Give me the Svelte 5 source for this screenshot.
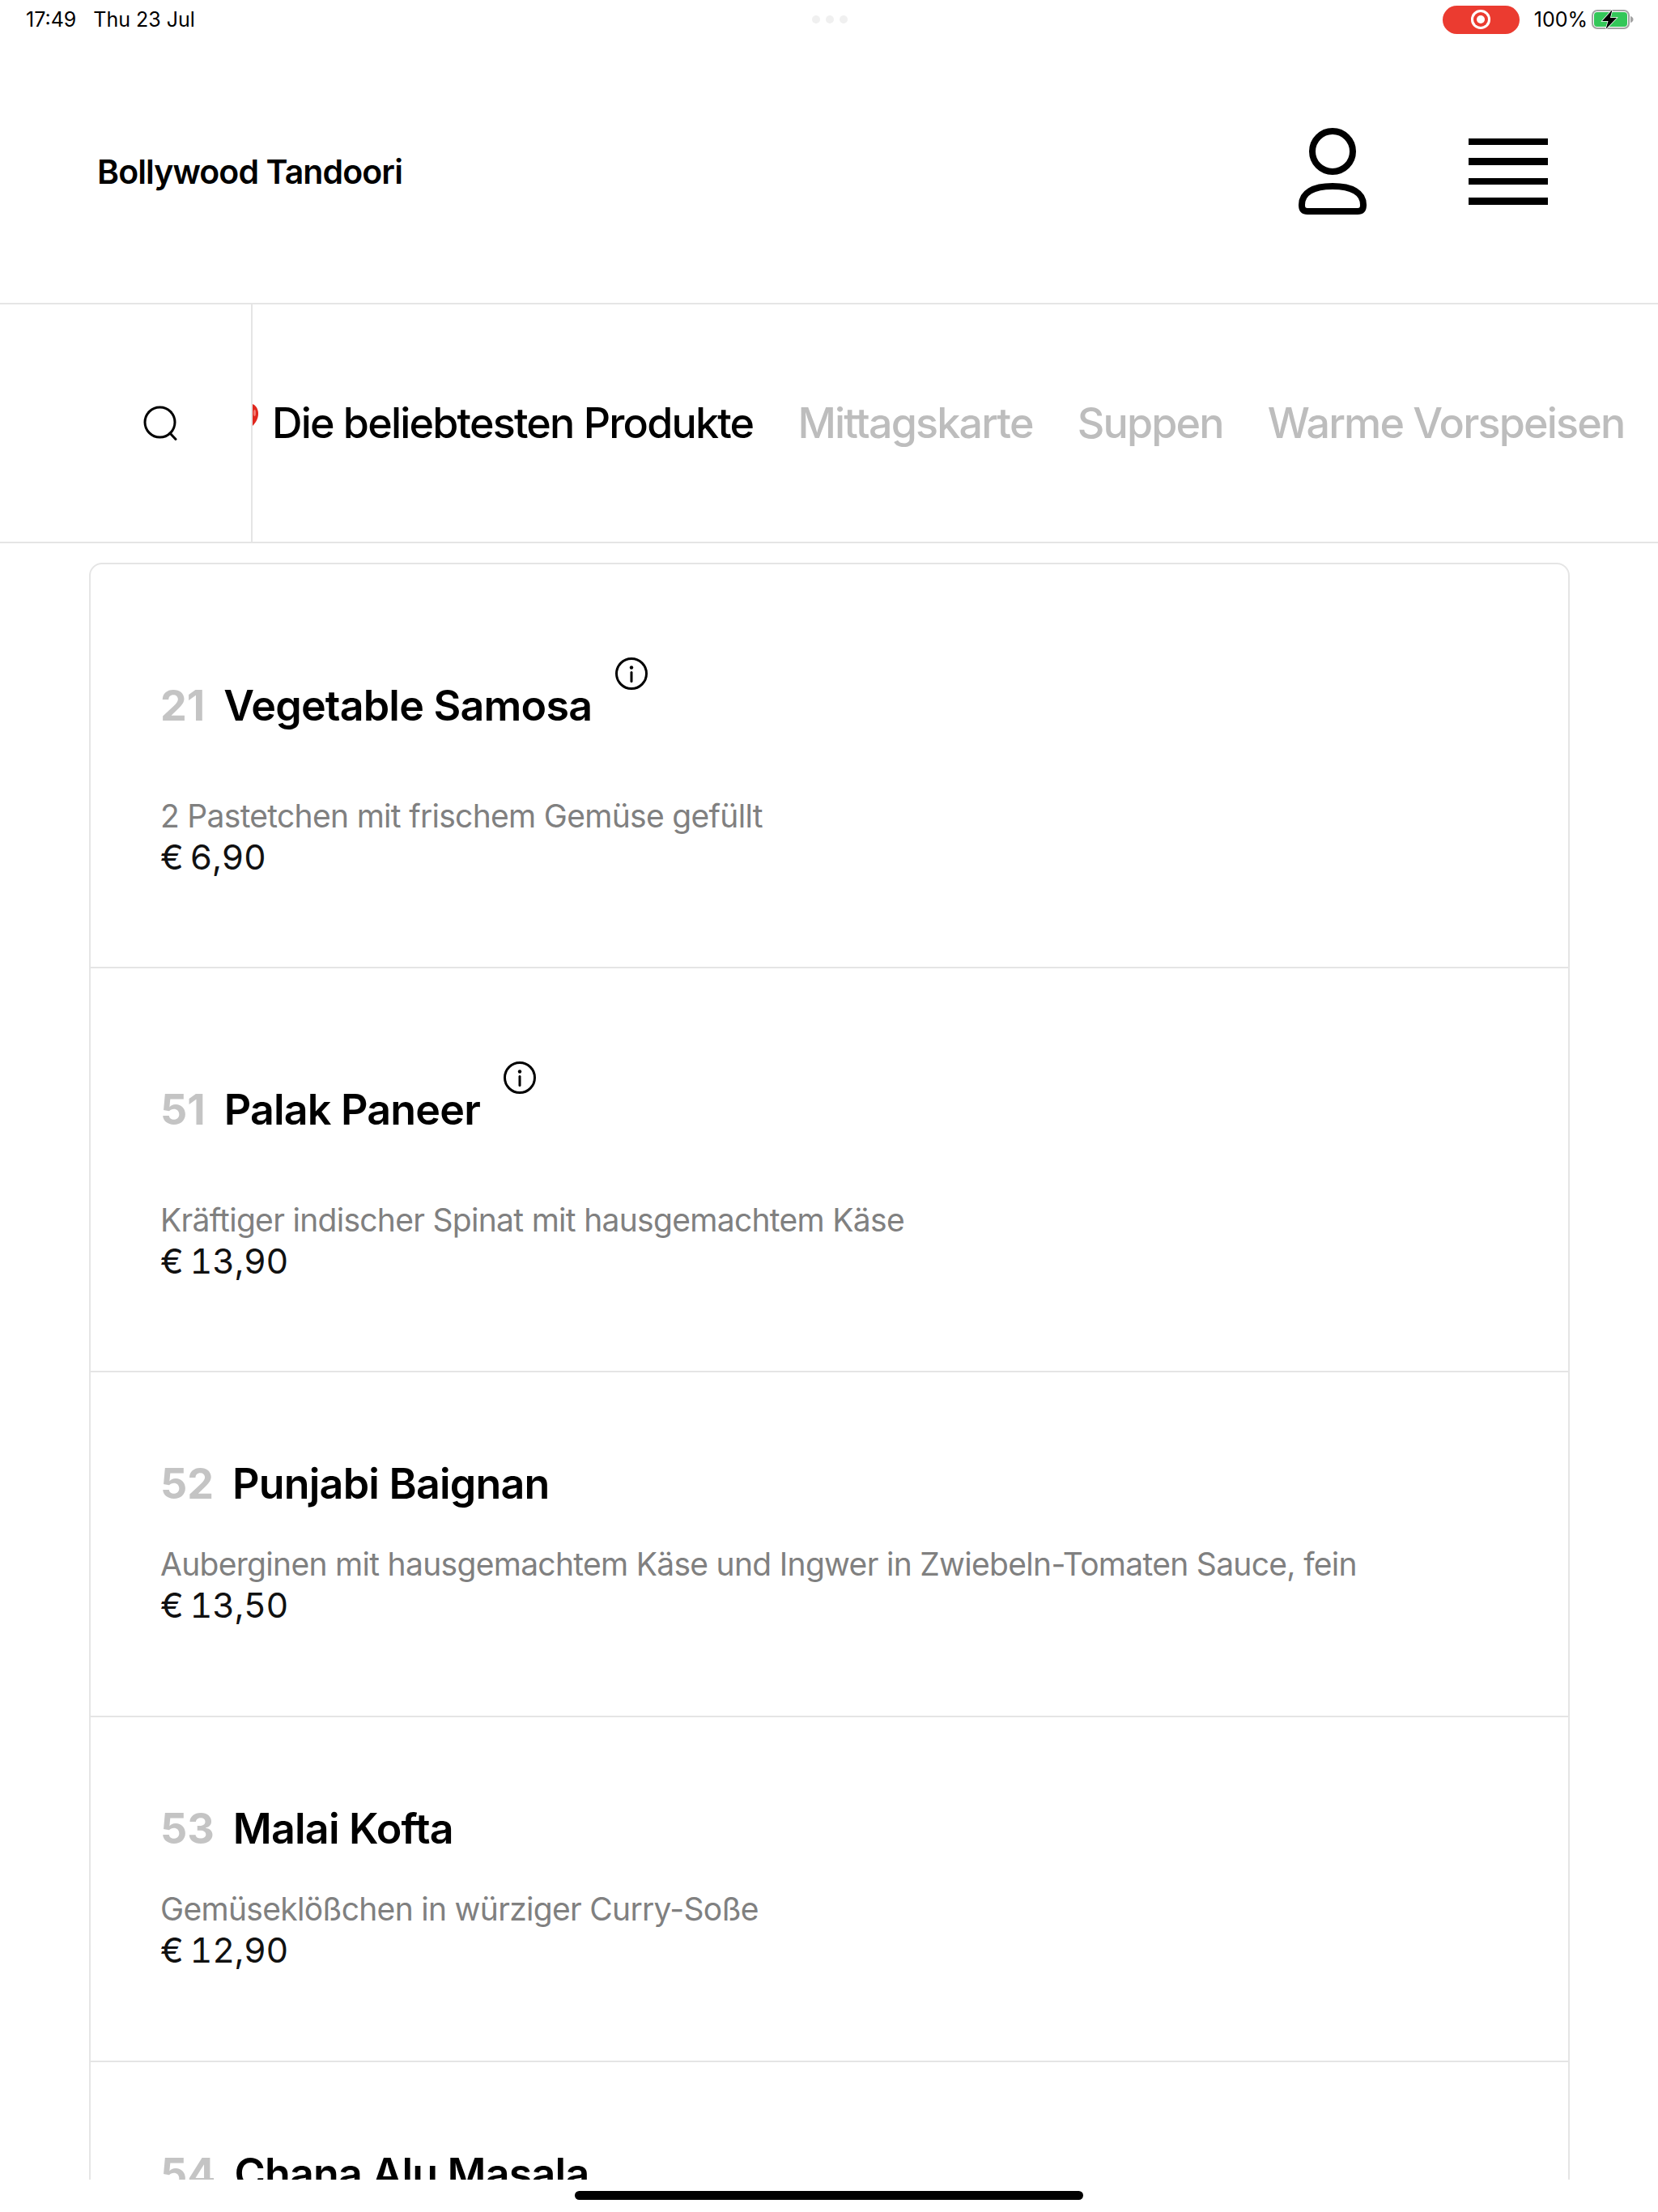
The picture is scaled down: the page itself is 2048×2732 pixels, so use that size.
<script>
	const tabs = ['Mittagskarte', 'Suppen', 'Warme Vorspeisen'];

	const dishes = [
		{ no: 21, name: 'Vegetable Samosa', info: true, desc: '2 Pastetchen mit frischem Gemüse gefüllt', price: '€ 6,90' },
		{ no: 51, name: 'Palak Paneer', info: true, desc: 'Kräftiger indischer Spinat mit hausgemachtem Käse', price: '€ 13,90' },
		{ no: 52, name: 'Punjabi Baignan', info: false, desc: 'Auberginen mit hausgemachtem Käse und Ingwer in Zwiebeln-Tomaten Sauce, fein', price: '€ 13,50' },
		{ no: 53, name: 'Malai Kofta', info: false, desc: 'Gemüseklößchen in würziger Curry-Soße', price: '€ 12,90' },
		{ no: 54, name: 'Chana Alu Masala', info: false, desc: 'Kichererbsen und Kartoffeln in würziger Soße', price: '€ 12,50' }
	];
</script>

<div class="page">
	<div class="statusbar">
		<div class="time">
			<span>17:49</span>
			<span>Thu 23 Jul</span>
		</div>
		<div class="dots"><i></i><i></i><i></i></div>
		<div class="status-right">
			<div class="rec"><b></b></div>
			<span>100%</span>
			<svg class="battery" width="52" height="24" viewBox="0 0 52 24">
				<rect x="1" y="1" width="45" height="22" rx="6" fill="none" stroke="#a3a3a3" stroke-width="2" />
				<rect x="3" y="3" width="41" height="18" rx="4" fill="#34c759" />
				<path d="M48 8c2 .6 3.500 2 3.500 4s-1.500 3.400-3.500 4z" fill="#a3a3a3" />
				<path d="M25.500 0 13 14h7.500L17.500 24 31 10h-8z" fill="#000" stroke="#fff" stroke-width="1.500" paint-order="stroke" />
			</svg>
		</div>
	</div>

	<header>
		<div class="brand">Bollywood Tandoori</div>
		<div class="header-icons">
			<svg class="user" width="86" height="108" viewBox="0 0 86 108" fill="none" stroke="#000" stroke-width="8">
				<circle cx="43" cy="29" r="25" />
				<path d="M5 95C5 80 19 72 43 72s38 8 38 23c0 5-2 8-7 8H12c-5 0-7-3-7-8z" />
			</svg>
			<div class="burger"><i></i><i></i><i></i><i></i></div>
		</div>
	</header>

	<nav>
		<div class="search">
			<svg width="42" height="44" viewBox="0 0 42 44" fill="none" stroke="#000" stroke-width="3">
				<circle cx="20.500" cy="20.500" r="18.500" />
				<path d="M33 34l7 7.500" stroke-linecap="round" />
			</svg>
		</div>
		<div class="tabs">
			<svg class="chili" width="7" height="27" viewBox="0 0 7 27">
				<path d="M0 0c4 1.500 7 6 7 12 0 6-3 11-7 15z" fill="#e0281e" />
				<ellipse cx="2.500" cy="11" rx="1.500" ry="4" fill="#f47a70" />
			</svg>
			<span class="tab active">Die beliebtesten Produkte</span>
			{#each tabs as tab}
				<span class="tab">{tab}</span>
			{/each}
		</div>
	</nav>

	<main>
		<section class="card">
			{#each dishes as d}
				<article class="dish">
					<div class="title" class:with-info={d.info}>
						<span class="no">{d.no}</span>
						<h2>{d.name}</h2>
						{#if d.info}
							<svg class="info" width="40" height="40" viewBox="0 0 40 40" fill="none" stroke="#000">
								<circle cx="20" cy="20" r="18.500" stroke-width="3" />
								<circle cx="20" cy="12.500" r="2.200" fill="#000" stroke="none" />
								<path d="M20 18.500v11" stroke-width="3" stroke-linecap="round" />
							</svg>
						{/if}
					</div>
					<p class="desc">{d.desc}</p>
					<p class="price">{d.price}</p>
				</article>
			{/each}
		</section>
	</main>

	<div class="home"><i></i></div>
</div>

<style>
	:global(body) {
		background: #fff;
	}

	.page {
		width: 2048px;
		height: 2732px;
		display: flex;
		flex-direction: column;
		overflow: hidden;
		background: #fff;
		color: #000;
		font-family: Inter, "Liberation Sans", sans-serif;
	}

	.statusbar {
		height: 48px;
		flex: none;
		display: grid;
		grid-template-columns: 1fr auto 1fr;
		align-items: center;
		padding: 0 30px 0 32px;
		font-size: 25px;
	}

	.time {
		display: flex;
		gap: 21px;
	}

	.dots {
		display: flex;
		gap: 7px;
	}

	.dots i {
		width: 10px;
		height: 10px;
		border-radius: 50%;
		background: #f0f0f0;
	}

	.status-right {
		display: flex;
		justify-content: flex-end;
		align-items: center;
		gap: 5px;
	}

	.rec {
		width: 95px;
		height: 35px;
		margin-right: 13px;
		border-radius: 18px;
		background: #eb3b30;
		display: flex;
		align-items: center;
		justify-content: center;
	}

	.rec b {
		width: 10px;
		height: 10px;
		border-radius: 50%;
		background: #fff;
		box-shadow: 0 0 0 4px #eb3b30, 0 0 0 7px #fff;
	}

	header {
		height: 328px;
		flex: none;
		display: flex;
		align-items: center;
		justify-content: space-between;
		padding: 2px 136px 0 120px;
		border-bottom: 2px solid #e5e5e5;
		box-sizing: border-box;
	}

	.brand {
		font-size: 41px;
		font-weight: 600;
		letter-spacing: -0.9px;
	}

	.header-icons {
		display: flex;
		align-items: center;
		gap: 125px;
		margin-top: -1px;
	}

	.burger {
		width: 98px;
		display: flex;
		flex-direction: column;
		gap: 16px;
	}

	.burger i {
		height: 8.500px;
		background: #000;
	}

	nav {
		height: 295px;
		flex: none;
		display: flex;
		border-bottom: 2px solid #e5e5e5;
		box-sizing: border-box;
	}

	.search {
		width: 312px;
		flex: none;
		box-sizing: border-box;
		display: flex;
		align-items: center;
		padding-left: 177px;
		border-right: 2px solid #e5e5e5;
	}

	.tabs {
		display: flex;
		align-items: center;
		gap: 55px;
		overflow: hidden;
		white-space: nowrap;
		min-width: 0;
	}

	.chili {
		flex: none;
		margin-right: -38px;
		margin-top: -20px;
	}

	.tab {
		font-size: 52px;
		font-weight: 500;
		letter-spacing: -1.8px;
		color: #bdbdbd;
	}

	.tab.active {
		color: #000;
	}

	main {
		flex: 1;
		min-height: 0;
		overflow: hidden;
		padding: 24px 109px 0 110px;
	}

	.card {
		border: 2px solid #e5e5e5;
		border-radius: 16px;
		background: #fff;
	}

	.dish {
		padding: 97px 86px 0;
		height: 426px;
		box-sizing: border-box;
		border-bottom: 2px solid #e5e5e5;
	}

	.dish:has(.with-info) {
		height: 499px;
	}

	.title {
		display: flex;
		align-items: center;
		gap: 23px;
		height: 80px;
	}

	.title.with-info {
		height: 154px;
	}

	.no {
		font-size: 52px;
		font-weight: 700;
		color: #c4c4c4;
	}

	h2 {
		margin: 0;
		font-size: 52px;
		font-weight: 600;
		letter-spacing: -0.8px;
	}

	.info {
		flex: none;
		margin: 0 0 79px 6px;
	}

	.desc {
		margin: 35px 0 0;
		font-size: 39px;
		line-height: 50px;
		letter-spacing: -0.7px;
		color: #808080;
	}

	.price {
		margin: 0;
		font-size: 43px;
		line-height: 50px;
		letter-spacing: -0.3px;
		font-variant-numeric: tabular-nums;
		word-spacing: -3px;
		color: #111;
	}

	.home {
		height: 40px;
		flex: none;
		display: flex;
		justify-content: center;
		padding-top: 14px;
		box-sizing: border-box;
	}

	.home i {
		width: 628px;
		height: 11px;
		border-radius: 6px;
		background: #000;
	}
</style>
